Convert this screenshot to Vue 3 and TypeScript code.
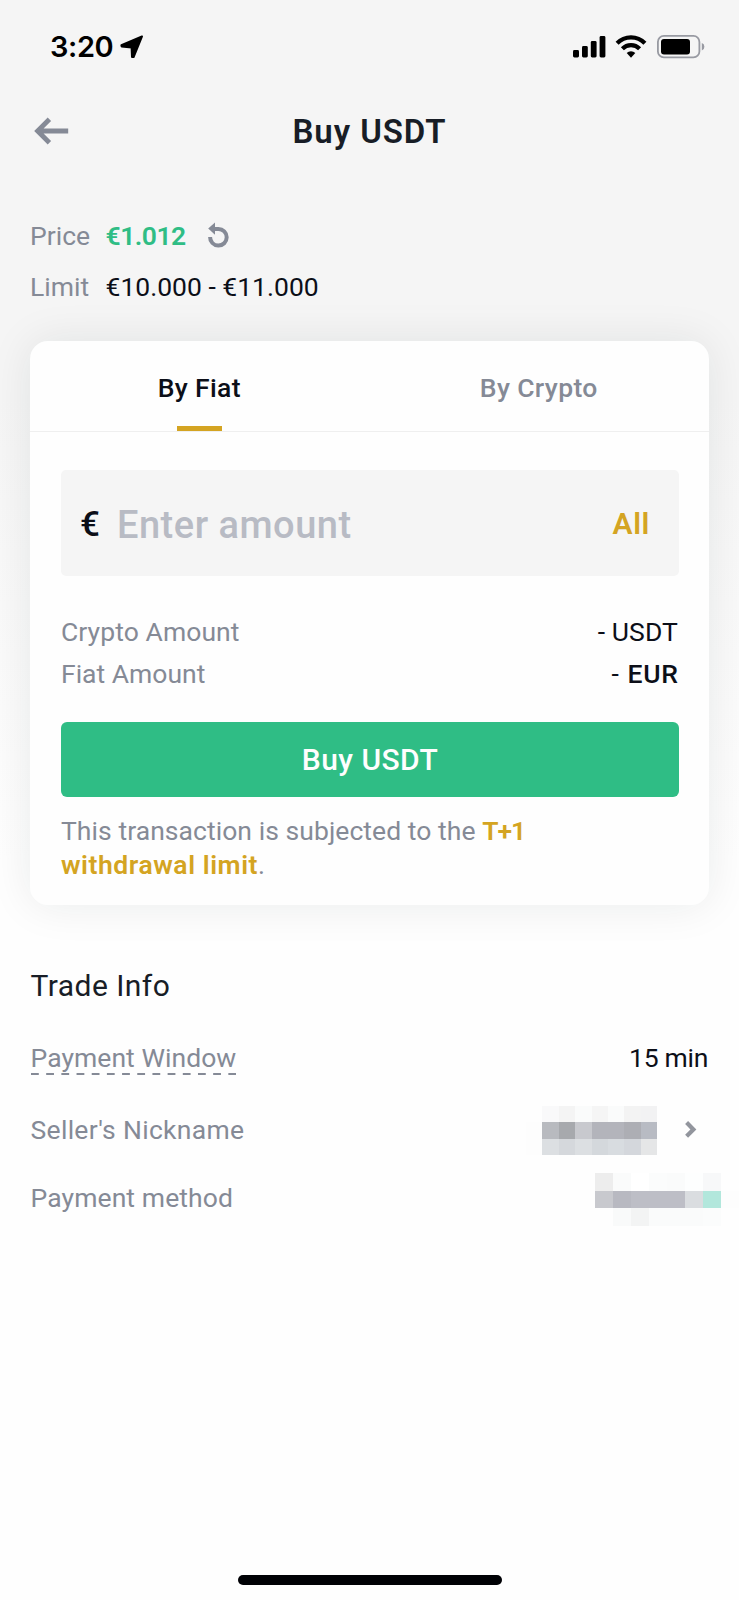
<script setup lang="ts">
import { ref } from 'vue'

interface Cell {
  x: number
  y: number
  fill: string
}

const tabs = ['By Fiat', 'By Crypto']
const activeTab = ref(0)
const amount = ref('')

function toCells(rows: string[][]): Cell[] {
  return rows.flatMap((row, y) => row.map((fill, x) => ({ x, y, fill })))
}

const sellerCells = toCells([
  ['#fefefe', '#f9f9fa', '#f4f4f4', '#fafbfb', '#f5f5f5', '#fafbfb', '#f3f3f3', '#f2f2f3'],
  ['#fdfdfd', '#b8babf', '#a7a9ad', '#c8c9ce', '#b3b4bb', '#b3b4bb', '#adaeb4', '#b8bbc3'],
  ['#fdfdfd', '#dcdfe2', '#d5d8dc', '#dcdfe2', '#d4d8dc', '#d8dce0', '#d4d7dc', '#e5e6e7'],
])

const methodCells = toCells([
  ['#ededed', '#fafbfb', '#ffffff', '#fbfcfc', '#fafbfb', '#fdfefe', '#f7f8f9', '#fefefe'],
  ['#c8c9ce', '#b8b9c1', '#bdbec6', '#bdbec6', '#bdbec6', '#dadde0', '#b2e7dc', '#fdfdfd'],
  ['#fefefe', '#f9fafa', '#f3f4f4', '#fafbfb', '#fafbfb', '#fafbfb', '#fbfcfc', '#fefefe'],
])
</script>

<template>
  <main class="screen">
    <header class="status">
      <span class="clock">3:20</span>
      <svg class="locate" width="24" height="24" viewBox="0 0 24 24">
        <path d="M22 1.4 1.4 10.2 1.6 11.4 11.6 12.4 12 22 13.6 22Z" stroke="#000" stroke-width="2" stroke-linejoin="round" />
      </svg>
      <svg class="signals" width="134" height="26" viewBox="0 0 134 26">
        <rect x="1" y="16" width="6" height="7.5" rx="1.4" />
        <rect x="10" y="12" width="5.8" height="11.5" rx="1.4" />
        <rect x="18.8" y="7" width="5.8" height="16.5" rx="1.4" />
        <rect x="27.6" y="2" width="5.8" height="21.5" rx="1.4" />
        <g fill="none" stroke="#000" stroke-width="4.2">
          <path d="M45.1 9.3a19.2 19.2 0 0 1 27.8 0" />
          <path d="M50.4 14.8a12 12 0 0 1 17.2 0" />
        </g>
        <path d="M54.7 18.9a6.1 6.1 0 0 1 8.6 0L59 23.8Z" />
        <rect x="85.9" y="1.9" width="41.5" height="21.5" rx="6" fill="none" stroke="#989aa2" stroke-width="1.8" />
        <rect x="89" y="5" width="29" height="15.5" rx="3" />
        <path d="M129.8 9v7.6q2.6-.8 2.6-3.8t-2.6-3.8Z" fill="#989aa2" />
      </svg>
    </header>

    <nav class="topbar">
      <svg class="back" width="36" height="28" viewBox="0 0 36 28">
        <path d="M34.2 14H4M15.4 2.2 3.6 14l11.8 11.8" fill="none" stroke="#858a96" stroke-width="4.8" />
      </svg>
      <h1>Buy USDT</h1>
    </nav>

    <section class="quote">
      <div class="quote-row">
        <span class="label price-label">Price</span>
        <b class="price">€1.012</b>
        <svg class="refresh" width="24" height="27" viewBox="0 0 24 27">
          <path d="M3.1 15a8.3 8.3 0 1 0 8.2-8H7" fill="none" stroke="#858a96" stroke-width="4" />
          <path d="M8 .4v12.4L1.2 6.5Z" fill="#858a96" />
        </svg>
      </div>
      <div class="quote-row">
        <span class="label limit-label">Limit</span>
        <span class="limit">€10.000 - €11.000</span>
      </div>
    </section>

    <section class="card">
      <div class="tabs">
        <button
          v-for="(tab, i) in tabs"
          :key="tab"
          class="tab"
          :class="{ active: activeTab === i }"
          @click="activeTab = i"
        >
          {{ tab }}
        </button>
      </div>
      <div class="field">
        <span class="symbol">€</span>
        <input v-model="amount" placeholder="Enter amount" />
        <button class="all">All</button>
      </div>
      <div class="sums">
        <div class="sum"><span class="label crypto">Crypto Amount</span><span class="usdt">- USDT</span></div>
        <div class="sum"><span class="label fiat">Fiat Amount</span><span class="eur">- <b>EUR</b></span></div>
      </div>
      <button class="buy">Buy USDT</button>
      <p class="note">
        <span class="intro">This transaction is subjected to the</span> <b class="t1">T+1</b><br />
        <b class="withdrawal">withdrawal limit</b>.
      </p>
    </section>

    <section class="info">
      <h2>Trade Info</h2>
      <div class="info-row window-row">
        <span class="label window">Payment Window
          <svg class="dashes" width="206" height="2" viewBox="0 0 206 2">
            <path d="M0 1H205" stroke="#858a96" stroke-width="2" stroke-dasharray="7.8 7.38" />
          </svg>
        </span>
        <span class="minutes">15 min</span>
      </div>
      <div class="info-row seller-row">
        <span class="label seller">Seller's Nickname</span>
        <svg class="mosaic seller-mosaic" width="131" height="49" viewBox="0 0 8 3" preserveAspectRatio="none" shape-rendering="crispEdges">
          <rect v-for="(c, i) in sellerCells" :key="i" :x="c.x" :y="c.y" width="1" height="1" :fill="c.fill" />
        </svg>
        <svg class="chevron" width="12" height="18" viewBox="0 0 12 18">
          <path d="M1.6 1.6 8.4 8.4l-6.8 6.8" fill="none" stroke="#92959d" stroke-width="4.2" />
        </svg>
      </div>
      <div class="info-row method-row">
        <span class="label method">Payment method</span>
        <svg class="mosaic method-mosaic" width="144" height="53" viewBox="0 0 8 3" preserveAspectRatio="none" shape-rendering="crispEdges">
          <rect v-for="(c, i) in methodCells" :key="i" :x="c.x" :y="c.y" width="1" height="1" :fill="c.fill" />
        </svg>
      </div>
    </section>

    <div class="home-bar"></div>
  </main>
</template>

<style>
body {
  margin: 0;
  background: #fefefe;
}
</style>

<style scoped>
* {
  box-sizing: border-box;
}
.screen {
  display: flex;
  flex-direction: column;
  width: 739px;
  height: 1600px;
  overflow: hidden;
  background: linear-gradient(#f5f5f5 0, #f5f5f5 400px, #fefefe 860px);
  color: #0c0f18;
  font-family: Roboto, "Liberation Sans", sans-serif;
  font-size: 26.5px;
  white-space: nowrap;
}
button {
  padding: 0;
  border: 0;
  background: none;
  font: inherit;
  letter-spacing: inherit;
  color: inherit;
}
.label {
  color: #858a96;
}
.status {
  display: flex;
  align-items: center;
  height: 94px;
  padding: 0 33px 0 50px;
}
.clock {
  padding-bottom: 1px;
  font-family: Inter, sans-serif;
  font-size: 29px;
  font-weight: 600;
  letter-spacing: -0.4px;
  color: #000;
}
.locate {
  margin-left: 7px;
}
.signals {
  margin-left: auto;
}
.topbar {
  display: flex;
  align-items: center;
  height: 76px;
  padding: 0 34px 2px;
}
h1 {
  flex: 1;
  margin: 0 36px 0 0;
  padding-top: 2px;
  text-align: center;
  font-size: 33px;
  font-weight: 600;
  line-height: 40px;
  letter-spacing: 0.95px;
  color: #181d26;
}
.quote {
  height: 171px;
  padding: 41px 31px 0 30px;
}
.quote-row {
  display: flex;
  align-items: center;
  height: 50px;
}
.quote-row:first-child {
  height: 48px;
  margin-bottom: 2px;
}
.quote-row .label {
  width: 75.5px;
}
.price {
  width: 80px;
  color: #2fbd85;
  font-weight: 600;
  letter-spacing: -0.5px;
}
.refresh {
  margin-left: 21px;
}
.card {
  width: 679px;
  height: 564px;
  margin-left: 30px;
  border-radius: 18px;
  background: #fefefe;
  box-shadow: 0 0 44px rgba(20, 30, 30, 0.085);
}
.tabs {
  display: flex;
  height: 91px;
  border-bottom: 1px solid #efefef;
  letter-spacing: 0.35px;
}
.tab {
  position: relative;
  flex: 1;
  padding-right: 1px;
  line-height: 94px;
  height: 90px;
  font-weight: 500;
  color: #858a96;
}
.tab.active {
  color: #0c0f18;
}
.tab.active::after {
  content: "";
  position: absolute;
  left: 147px;
  top: 85px;
  width: 45px;
  height: 5px;
  background: #d4a422;
}
.field {
  display: flex;
  align-items: center;
  width: 618px;
  height: 106px;
  margin: 38px 0 0 31px;
  padding: 2px 29px 0 19px;
  border-radius: 5px;
  background: #f5f5f5;
}
.symbol {
  width: 37px;
  font-size: 35px;
  font-weight: 500;
}
.field input {
  flex: 1;
  min-width: 0;
  padding: 2px 0 0;
  border: 0;
  outline: 0;
  background: none;
  font: 500 38px Roboto, sans-serif;
  letter-spacing: 0.5px;
}
.field input::placeholder {
  color: #b8bbc4;
  opacity: 1;
}
.all {
  padding-bottom: 2px;
  color: #d4a422;
  font-size: 30px;
  font-weight: 600;
  letter-spacing: 0.6px;
}
.sums {
  padding: 34px 31px 0;
}
.sum {
  display: flex;
  justify-content: space-between;
  align-items: center;
  height: 42px;
}
.crypto {
  letter-spacing: 0.08px;
}
.usdt {
  letter-spacing: 0.1px;
}
.sum b {
  font-weight: 500;
  letter-spacing: 0.8px;
}
.eur {
  word-spacing: 2px;
  margin-right: -0.8px;
}
.buy {
  display: block;
  width: 618px;
  height: 75px;
  margin: 28px 0 0 31px;
  border-radius: 6px;
  background: #2fbd85;
  color: #fefefe;
  font-size: 30px;
  font-weight: 500;
  letter-spacing: 0.45px;
}
.note {
  margin: 17px 31px 0;
  line-height: 34px;
  color: #858a96;
}
.intro {
  letter-spacing: 0.06px;
}
.note b {
  font-weight: 600;
  color: #d4a422;
}
.note .t1 {
  letter-spacing: -1px;
}
.note .withdrawal {
  letter-spacing: 0.55px;
}
.info {
  height: 670px;
  padding: 61px 31px 0 30.5px;
}
h2 {
  margin: 0;
  font-size: 30px;
  font-weight: 400;
  line-height: 40px;
  letter-spacing: 0.45px;
  color: #181d26;
}
.info-row {
  display: flex;
  align-items: center;
}
.window-row {
  height: 86px;
  padding-top: 16px;
  justify-content: space-between;
}
.window {
  position: relative;
  letter-spacing: 0.05px;
}
.dashes {
  position: absolute;
  left: 0;
  bottom: -2px;
}
.minutes {
  letter-spacing: -0.3px;
}
.seller-row {
  height: 68px;
  margin-top: 4px;
  padding-right: 11px;
}
.seller {
  padding-bottom: 2px;
  letter-spacing: 0.3px;
}
.mosaic {
  margin-left: auto;
}
.chevron {
  margin-left: 28px;
}
.method-row {
  height: 68px;
  margin-right: -31px;
}
.method {
  padding-bottom: 2px;
  letter-spacing: 0.1px;
}
.method-mosaic {
  margin-top: 2px;
}
.home-bar {
  width: 264px;
  height: 10px;
  margin-left: 238px;
  border-radius: 5px;
  background: #000105;
}
</style>
